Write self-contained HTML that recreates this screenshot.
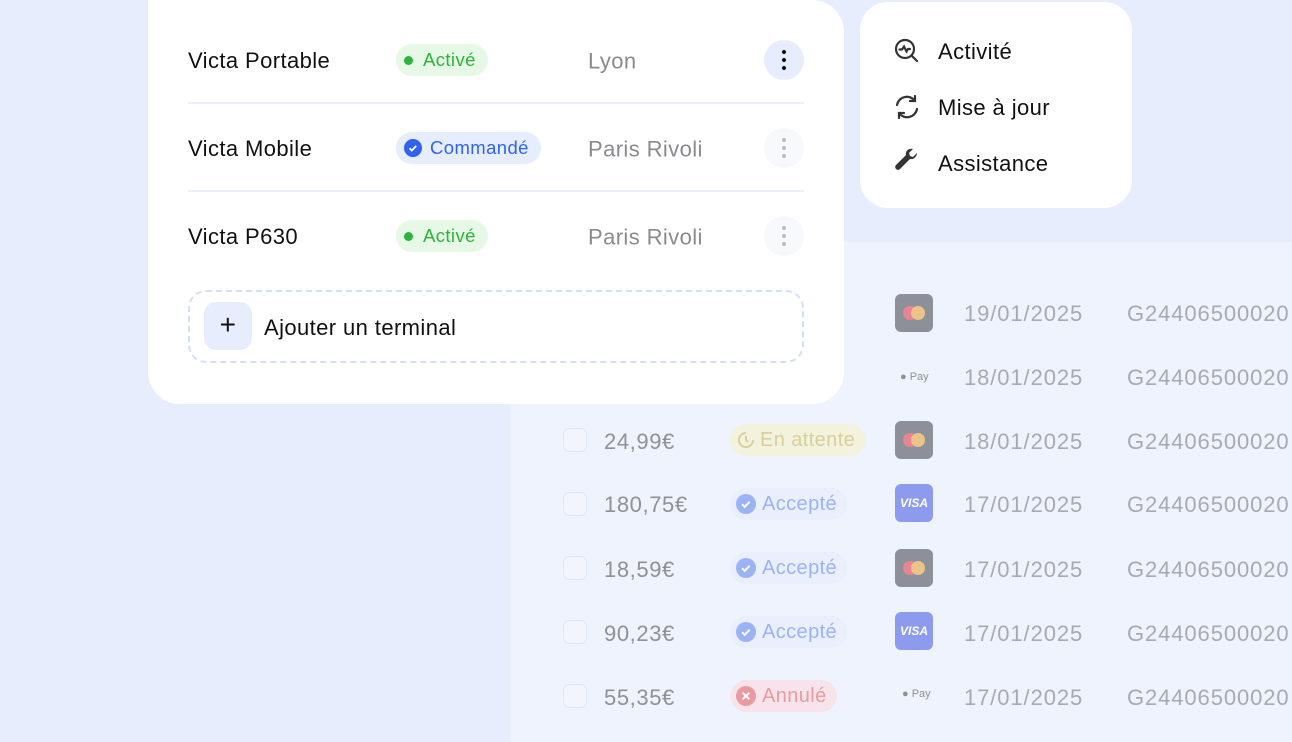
<!DOCTYPE html>
<html><head><meta charset="utf-8"><style>
*{margin:0;padding:0;box-sizing:border-box}
body{width:1292px;height:736px;overflow:hidden;background:#e7edfc;font-family:"Liberation Sans",sans-serif;position:relative;letter-spacing:0.4px}
.panel{position:absolute;left:510px;top:242px;width:800px;height:500px;background:#eff3fd}
.abs{position:absolute}
.card{position:absolute;left:148px;top:0;width:696px;height:404px;background:#fff;border-radius:0 0 32px 32px;border-top-right-radius:32px}
.row{position:absolute;left:188px;width:616px;height:88px}
.name{position:absolute;left:0;font-size:22px;color:#111;top:50%;transform:translateY(-46%)}
.badge{position:absolute;left:208px;top:50%;transform:translateY(-50%);height:32px;border-radius:16px;padding:0 12px 0 8px;display:flex;align-items:center;font-size:18.5px}
.loc{position:absolute;left:400px;top:50%;transform:translateY(-44%);font-size:22px;color:#8a8a8e}
.dots{position:absolute;right:0;top:50%;transform:translateY(-50%);width:40px;height:40px;border-radius:20px;display:flex;flex-direction:column;align-items:center;justify-content:center;gap:4px}
.dots i{width:4px;height:4px;border-radius:2px;display:block}
.sep{position:absolute;left:188px;width:616px;height:2px;background:#e8eefc}
.menu{position:absolute;left:860px;top:2px;width:272px;height:206px;background:#fff;border-radius:28px}
.mi{position:absolute;left:78px;font-size:22px;color:#111}
.t{position:absolute;font-size:22px;color:#a7a9b3;letter-spacing:0.9px}
.cb{position:absolute;left:563px;width:24px;height:24px;border:1.5px solid #e2e6f0;border-radius:6px;background:#f2f5fd}
.amt{position:absolute;left:604px;font-size:22px;color:#8f9098;letter-spacing:0.6px}
.tb{position:absolute;left:730px;height:32px;border-radius:16px;padding:0 10px 0 6px;display:flex;align-items:center;font-size:20px}
.card2{position:absolute;left:895px;width:38px;height:38px;border-radius:6px}
</style></head><body>
<div class="panel"></div>
<div class="card"></div>

<div class="row" style="top:16px"><div class="name">Victa Portable</div>
<div class="badge" style="background:#e6f9e6;color:#2db33a"><span style="width:9px;height:9px;border-radius:5px;background:#2db33a;margin-right:10px"></span>Activé</div>
<div class="loc">Lyon</div>
<div class="dots" style="background:#e7edfc"><i style="background:#111"></i><i style="background:#111"></i><i style="background:#111"></i></div></div>
<div class="sep" style="top:102px"></div>
<div class="row" style="top:104px"><div class="name">Victa Mobile</div>
<div class="badge" style="background:#e6edfd;color:#2f63ee"><svg width="18" height="18" viewBox="0 0 18 18" style="margin-right:8px"><circle cx="9" cy="9" r="9" fill="#2f63ee"/><path d="M5.5 9.2l2.3 2.3 4.5-4.6" stroke="#fff" stroke-width="1.8" fill="none"/></svg>Commandé</div>
<div class="loc">Paris Rivoli</div>
<div class="dots" style="background:#f8f9fd"><i style="background:#bbb"></i><i style="background:#bbb"></i><i style="background:#bbb"></i></div></div>
<div class="sep" style="top:190px"></div>
<div class="row" style="top:192px"><div class="name">Victa P630</div>
<div class="badge" style="background:#e6f9e6;color:#2db33a"><span style="width:9px;height:9px;border-radius:5px;background:#2db33a;margin-right:10px"></span>Activé</div>
<div class="loc">Paris Rivoli</div>
<div class="dots" style="background:#f8f9fd"><i style="background:#bbb"></i><i style="background:#bbb"></i><i style="background:#bbb"></i></div></div>

<div class="abs" style="left:188px;top:290px;width:616px;height:73px;border:2px dashed #d3def9;border-radius:18px"></div>
<div class="abs" style="left:204px;top:302px;width:48px;height:48px;background:#e7edfc;border-radius:12px;font-size:28px;color:#111;text-align:center;line-height:46px">+</div>
<div class="abs" style="left:264px;top:315px;font-size:22px;color:#111">Ajouter un terminal</div>

<div class="menu"></div>
<svg class="abs" style="left:893px;top:37px" width="28" height="28" viewBox="0 0 28 28" fill="none" stroke="#333" stroke-width="2.2" stroke-linecap="round"><circle cx="12" cy="12" r="9"/><path d="M19 19l5 5"/><path d="M6.5 12.5h2.5l2-3 2.5 5 1.5-2.5h2"/></svg>
<div class="mi" style="left:938px;top:39px">Activité</div>
<svg class="abs" style="left:893px;top:93px" width="28" height="28" viewBox="0 0 28 28" fill="none" stroke="#333" stroke-width="2.2" stroke-linecap="round"><path d="M4 12a10 10 0 0 1 18-4"/><path d="M22 3v5h-5"/><path d="M24 16a10 10 0 0 1-18 4"/><path d="M6 25v-5h5"/></svg>
<div class="mi" style="left:938px;top:95px">Mise à jour</div>
<svg class="abs" style="left:893px;top:148px" width="28" height="28" viewBox="0 0 28 28"><path d="M24 5l-4 4-3-1-1-3 4-4c-4-1-8 2-7 6l-10 10a2.5 2.5 0 0 0 4 4l10-10c4 1 7-3 7-6z" fill="#333"/></svg>
<div class="mi" style="left:938px;top:151px">Assistance</div>

<div class="card2" style="top:294px;background:#8e9099"><span class="abs" style="left:8px;top:12px;width:14px;height:14px;border-radius:7px;background:#e98592"></span><span class="abs" style="left:16px;top:12px;width:14px;height:14px;border-radius:7px;background:#ecc48a"></span></div>
<div class="abs" style="left:900px;top:371px;font-size:11px;color:#8f9098;letter-spacing:0">● Pay</div>
<div class="card2" style="top:421px;background:#8e9099"><span class="abs" style="left:8px;top:12px;width:14px;height:14px;border-radius:7px;background:#e98592"></span><span class="abs" style="left:16px;top:12px;width:14px;height:14px;border-radius:7px;background:#ecc48a"></span></div>
<div class="card2" style="top:484px;background:#8c9bee;color:#fff;font-size:12px;font-weight:bold;font-style:italic;text-align:center;line-height:38px;letter-spacing:0">VISA</div>
<div class="card2" style="top:549px;background:#8e9099"><span class="abs" style="left:8px;top:12px;width:14px;height:14px;border-radius:7px;background:#e98592"></span><span class="abs" style="left:16px;top:12px;width:14px;height:14px;border-radius:7px;background:#ecc48a"></span></div>
<div class="card2" style="top:612px;background:#8c9bee;color:#fff;font-size:12px;font-weight:bold;font-style:italic;text-align:center;line-height:38px;letter-spacing:0">VISA</div>
<div class="abs" style="left:902px;top:688px;font-size:11px;color:#8f9098;letter-spacing:0">● Pay</div>

<div class="t" style="left:964px;top:301px">19/01/2025</div><div class="t" style="left:1127px;top:301px">G24406500020</div>
<div class="t" style="left:964px;top:365px">18/01/2025</div><div class="t" style="left:1127px;top:365px">G24406500020</div>
<div class="t" style="left:964px;top:429px">18/01/2025</div><div class="t" style="left:1127px;top:429px">G24406500020</div>
<div class="t" style="left:964px;top:492px">17/01/2025</div><div class="t" style="left:1127px;top:492px">G24406500020</div>
<div class="t" style="left:964px;top:557px">17/01/2025</div><div class="t" style="left:1127px;top:557px">G24406500020</div>
<div class="t" style="left:964px;top:621px">17/01/2025</div><div class="t" style="left:1127px;top:621px">G24406500020</div>
<div class="t" style="left:964px;top:685px">17/01/2025</div><div class="t" style="left:1127px;top:685px">G24406500020</div>

<div class="cb" style="top:428px"></div><div class="amt" style="top:429px">24,99€</div>
<div class="tb" style="top:424px;background:#f3f2dc;color:#d8cf9a"><svg width="20" height="20" viewBox="0 0 20 20" style="margin-right:4px" fill="none" stroke="#d8cf9a" stroke-width="2"><path d="M17 10a7 7 0 1 1-7-7"/><path d="M10 6v4l2 2"/></svg>En attente</div>
<div class="cb" style="top:492px"></div><div class="amt" style="top:492px">180,75€</div>
<div class="tb" style="top:488px;background:#e9effd;color:#9bb3f5"><svg width="20" height="20" viewBox="0 0 18 18" style="margin-right:6px"><circle cx="9" cy="9" r="9" fill="#9bb3f5"/><path d="M5.5 9.2l2.3 2.3 4.5-4.6" stroke="#fff" stroke-width="1.8" fill="none"/></svg>Accepté</div>
<div class="cb" style="top:556px"></div><div class="amt" style="top:557px">18,59€</div>
<div class="tb" style="top:552px;background:#e9effd;color:#9bb3f5"><svg width="20" height="20" viewBox="0 0 18 18" style="margin-right:6px"><circle cx="9" cy="9" r="9" fill="#9bb3f5"/><path d="M5.5 9.2l2.3 2.3 4.5-4.6" stroke="#fff" stroke-width="1.8" fill="none"/></svg>Accepté</div>
<div class="cb" style="top:620px"></div><div class="amt" style="top:621px">90,23€</div>
<div class="tb" style="top:616px;background:#e9effd;color:#9bb3f5"><svg width="20" height="20" viewBox="0 0 18 18" style="margin-right:6px"><circle cx="9" cy="9" r="9" fill="#9bb3f5"/><path d="M5.5 9.2l2.3 2.3 4.5-4.6" stroke="#fff" stroke-width="1.8" fill="none"/></svg>Accepté</div>
<div class="cb" style="top:684px"></div><div class="amt" style="top:685px">55,35€</div>
<div class="tb" style="top:680px;background:#f7e4ea;color:#ea9aa3"><svg width="20" height="20" viewBox="0 0 18 18" style="margin-right:6px"><circle cx="9" cy="9" r="9" fill="#ea9aa3"/><path d="M6 6l6 6M12 6l-6 6" stroke="#fff" stroke-width="1.8"/></svg>Annulé</div>
</body></html>
